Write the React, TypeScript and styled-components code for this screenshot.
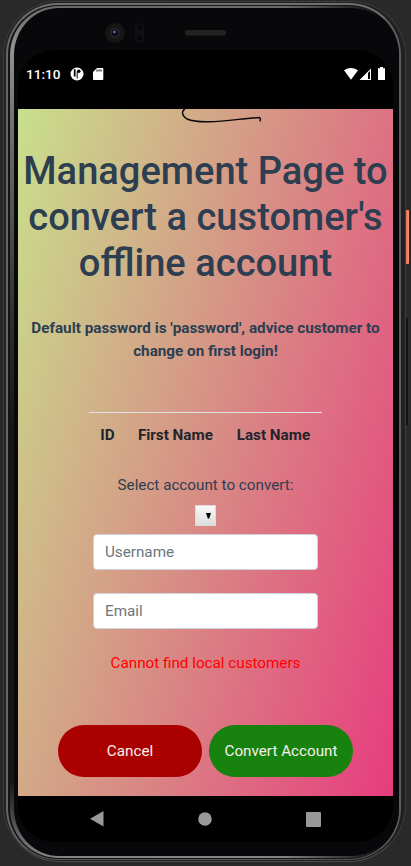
import React from "react";
import styled, { createGlobalStyle } from "styled-components";

const GlobalStyle = createGlobalStyle`
  *, *::before, *::after { box-sizing: border-box; }
  body { margin: 0; background: #292929; font-family: Roboto, sans-serif; }
`;

const Stage = styled.div`
  position: relative;
  width: 411px;
  height: 866px;
  padding: 1px 5px 4px 3px;
  overflow: hidden;
  background: #292929;
`;

const SideKey = styled.i<{ $top: number; $height: number; $color: string }>`
  position: absolute;
  left: 406px;
  top: ${(p) => p.$top}px;
  width: 3px;
  height: ${(p) => p.$height}px;
  border-radius: 0 1px 1px 0;
  background: ${(p) => p.$color};
`;

const OuterRim = styled.div`
  height: 861px;
  padding: 1px 4px 1px 2px;
  border-radius: 55px 55px 57px 57px;
  border: 1px solid #3c3d3d;
  border-bottom-color: #4c4c4d;
  background: #202122;
`;

const InnerRim = styled.div`
  height: 100%;
  padding: 1px 0 1px 2px;
  border-radius: 52px;
  border-style: solid;
  border-width: 2px 2px 1px 2px;
  border-color: #707072 #5b5d5e #555557 #66676a;
  background: linear-gradient(90deg, #141416 0 5%, #181818 50%, #141414);
`;

const Bezel = styled.div`
  display: flex;
  flex-direction: column;
  height: 100%;
  border-style: solid;
  border-width: 2px 0 2px 4px;
  border-color: transparent;
  border-radius: 49px;
  background:
    linear-gradient(#08080a, #08080a) padding-box,
    linear-gradient(90deg, transparent 70%, #08080a 97%) border-box,
    linear-gradient(#6a6a6a 0, #929292 5%, #777 12%, #303031 36%, #151516 50% 91%, #858588 100%) border-box;
  padding: 0 6px 0 4px;
  overflow: hidden;
`;

const Forehead = styled.div`
  flex: 0 0 42px;
`;

const Sensors = styled.svg`
  display: block;
  width: 375px;
  height: 42px;
`;

const Screen = styled.div`
  display: flex;
  flex-direction: column;
  width: 375px;
  height: 792px;
  flex: none;
  border-radius: 36px;
  background: #000;
`;

const StatusBar = styled.header`
  display: flex;
  align-items: center;
  flex: 0 0 59px;
  padding: 0 7px 11px 8px;
  color: #fff;
`;

const Clock = styled.time`
  width: 44px;
  font-size: 13.6px;
  font-weight: 500;
  line-height: 16px;
`;

const Icon = styled.svg`
  display: block;
  flex: none;
`;

const StatusGroup = styled.div<{ $end?: boolean }>`
  display: flex;
  align-items: center;
  gap: ${(p) => (p.$end ? 1 : 8)}px;
  margin-left: ${(p) => (p.$end ? "auto" : "0")};
`;

const Page = styled.main`
  display: flex;
  flex-direction: column;
  align-items: center;
  flex: 0 0 687px;
  background: linear-gradient(105deg, #c8e08c 0%, #e73c7e 100%);
  color: #2c3e50;
  font-size: 15.22px;
  text-align: center;
`;

const Signature = styled.svg`
  display: block;
  flex: none;
  width: 375px;
  height: 16px;
`;

const Title = styled.h1`
  margin: 23px 0 0;
  font-size: 38.1px;
  font-weight: 500;
  line-height: 46px;
  white-space: nowrap;
`;

const Notice = styled.p`
  margin: 31px 0 0;
  font-size: 15.25px;
  font-weight: 700;
  line-height: 23px;
  white-space: nowrap;
`;

const CustomerTable = styled.table`
  width: 233px;
  margin-top: 49px;
  border-collapse: collapse;
  border-top: 1px solid #dee2e6;
  color: #212529;
`;

const HeadCell = styled.th`
  padding: 11px 11px 12px;
  font-size: 15.22px;
  font-weight: 700;
  line-height: 23px;
  white-space: nowrap;
`;

const SelectLabel = styled.label`
  margin-top: 15px;
  line-height: 23px;
`;

const SelectButton = styled.button`
  display: flex;
  align-items: center;
  justify-content: flex-end;
  width: 21px;
  height: 21px;
  margin: 8px 0;
  padding: 0 4px 0 0;
  border: 1px solid #dcdcdc;
  background: linear-gradient(#f8f8f8, #dddddd);
`;

const Field = styled.input`
  width: 225px;
  height: 36px;
  margin: 0 0 23px;
  padding: 0 11px;
  border: 1px solid #ced4da;
  border-radius: 4px;
  outline: none;
  background: #fff;
  font: 15.22px Roboto, sans-serif;
  &::placeholder { color: #6c757d; opacity: 1; }
`;

const ErrorText = styled.p`
  margin: 0;
  color: #ff0000;
  line-height: 23px;
`;

const Actions = styled.div`
  display: flex;
  gap: 7px;
  margin-top: 50px;
`;

const ActionButton = styled.button<{ $color: string }>`
  width: 144px;
  height: 52px;
  padding: 0;
  border: 0;
  border-radius: 26px;
  background: ${(p) => p.$color};
  color: #f8f0ec;
  font: 15.22px Roboto, sans-serif;
`;

const NavBar = styled.nav`
  display: flex;
  flex: 0 0 46px;
  align-items: center;
  justify-content: space-between;
  padding: 0 72px 0 72px;
`;

export default function App() {
  return (
    <>
      <GlobalStyle />
      <Stage>
        <SideKey $top={210} $height={54} $color="linear-gradient(90deg,#ee6b50,#f49478)" />
        <SideKey $top={318} $height={107} $color="linear-gradient(90deg,#111 0 33%,#191919 67%,#424242)" />
        <OuterRim>
          <InnerRim>
            <Bezel>
              <Forehead>
                <Sensors viewBox="18 8 375 42" aria-hidden="true">
                  <circle cx="115" cy="33" r="10" fill="#151515" />
                  <circle cx="115" cy="33" r="5.5" fill="#202126" />
                  <circle cx="115" cy="33" r="3" fill="#0b0c18" />
                  <circle cx="114.5" cy="32" r="1.2" fill="#7781a0" />
                  <rect x="135" y="23" width="9" height="20" rx="4.5" fill="#111113" />
                  <circle cx="139.5" cy="27.5" r="3" fill="#08080a" />
                  <circle cx="139.5" cy="38" r="3" fill="#08080a" />
                  <rect x="185" y="30" width="41" height="5.5" rx="2" fill="#222" />
                </Sensors>
              </Forehead>
              <Screen>
                <StatusBar>
                  <Clock>11:10</Clock>
                  <StatusGroup>
                    <Icon width="14" height="14" viewBox="0 0 14 14">
                      <circle cx="7" cy="7" r="6.5" fill="#fff" />
                      <path d="M4.7 2.2V9.6" fill="none" stroke="#000" strokeWidth="1.7" />
                      <path d="M7.2 11.5V4.6" fill="none" stroke="#000" strokeWidth="1" />
                      <circle cx="8.8" cy="4.3" r="1.8" />
                    </Icon>
                    <Icon width="12" height="14" viewBox="0 0 12 14">
                      <path d="M5 1H10.5Q11.3 1 11.3 1.8V12.2Q11.3 13 10.5 13H1.8Q1 13 1 12.2V5Z" fill="#fff" />
                      <path d="M5 2.5V4.5M7 2.5V4.5M9 2.5V4.5" stroke="#000" strokeWidth="1" />
                    </Icon>
                  </StatusGroup>
                  <StatusGroup $end>
                    <Icon width="14" height="14" viewBox="0 0 14 14">
                      <path d="M0 3.3Q7-1.4 14 3.3L7 12.8Z" fill="#fff" />
                    </Icon>
                    <Icon width="13" height="14" viewBox="0 0 13 14">
                      <path d="M.5 13L12 1.5V13Z" fill="#fff" />
                      <path d="M9 6V12H11V4" fill="#000" />
                    </Icon>
                    <Icon width="13" height="14" viewBox="0 0 13 14">
                      <path d="M7 0H10V1.2H12V13H5V1.2H7Z" fill="#fff" />
                    </Icon>
                  </StatusGroup>
                </StatusBar>
                <Page>
                  <Signature viewBox="18 109 375 16" aria-hidden="true">
                    <path
                      d="M185 109C181 111 182 116 187 119C200 124.5 226 120.5 250 118.2L259 117.5Q261 117.5 260 121.5"
                      fill="none"
                      stroke="#080808"
                      strokeWidth="1.4"
                    />
                  </Signature>
                  <Title>
                    Management Page to
                    <br />
                    convert a customer's
                    <br />
                    offline account
                  </Title>
                  <Notice>
                    Default password is 'password', advice customer to
                    <br />
                    change on first login!
                  </Notice>
                  <CustomerTable>
                    <thead>
                      <tr>
                        <HeadCell>ID</HeadCell>
                        <HeadCell>First Name</HeadCell>
                        <HeadCell>Last Name</HeadCell>
                      </tr>
                    </thead>
                  </CustomerTable>
                  <SelectLabel htmlFor="account">Select account to convert:</SelectLabel>
                  <SelectButton id="account" aria-label="Account">
                    <Icon width="5" height="6" viewBox="0 0 5 6">
                      <path d="M0 0H5L3.2 5.5H1.8Z" />
                    </Icon>
                  </SelectButton>
                  <Field placeholder="Username" />
                  <Field placeholder="Email" />
                  <ErrorText>Cannot find local customers</ErrorText>
                  <Actions>
                    <ActionButton $color="#ab0000">Cancel</ActionButton>
                    <ActionButton $color="#17820e">Convert Account</ActionButton>
                  </Actions>
                </Page>
                <NavBar>
                  <Icon width="14" height="16" viewBox="0 0 14 16">
                    <path d="M13.5 0V15.5L0 7.8Z" fill="#999" />
                  </Icon>
                  <Icon width="14" height="14" viewBox="0 0 14 14">
                    <circle cx="7" cy="7" r="6.8" fill="#999" />
                  </Icon>
                  <Icon width="15" height="15" viewBox="0 0 15 15">
                    <rect width="15" height="15" rx="1" fill="#999" />
                  </Icon>
                </NavBar>
              </Screen>
            </Bezel>
          </InnerRim>
        </OuterRim>
      </Stage>
    </>
  );
}
